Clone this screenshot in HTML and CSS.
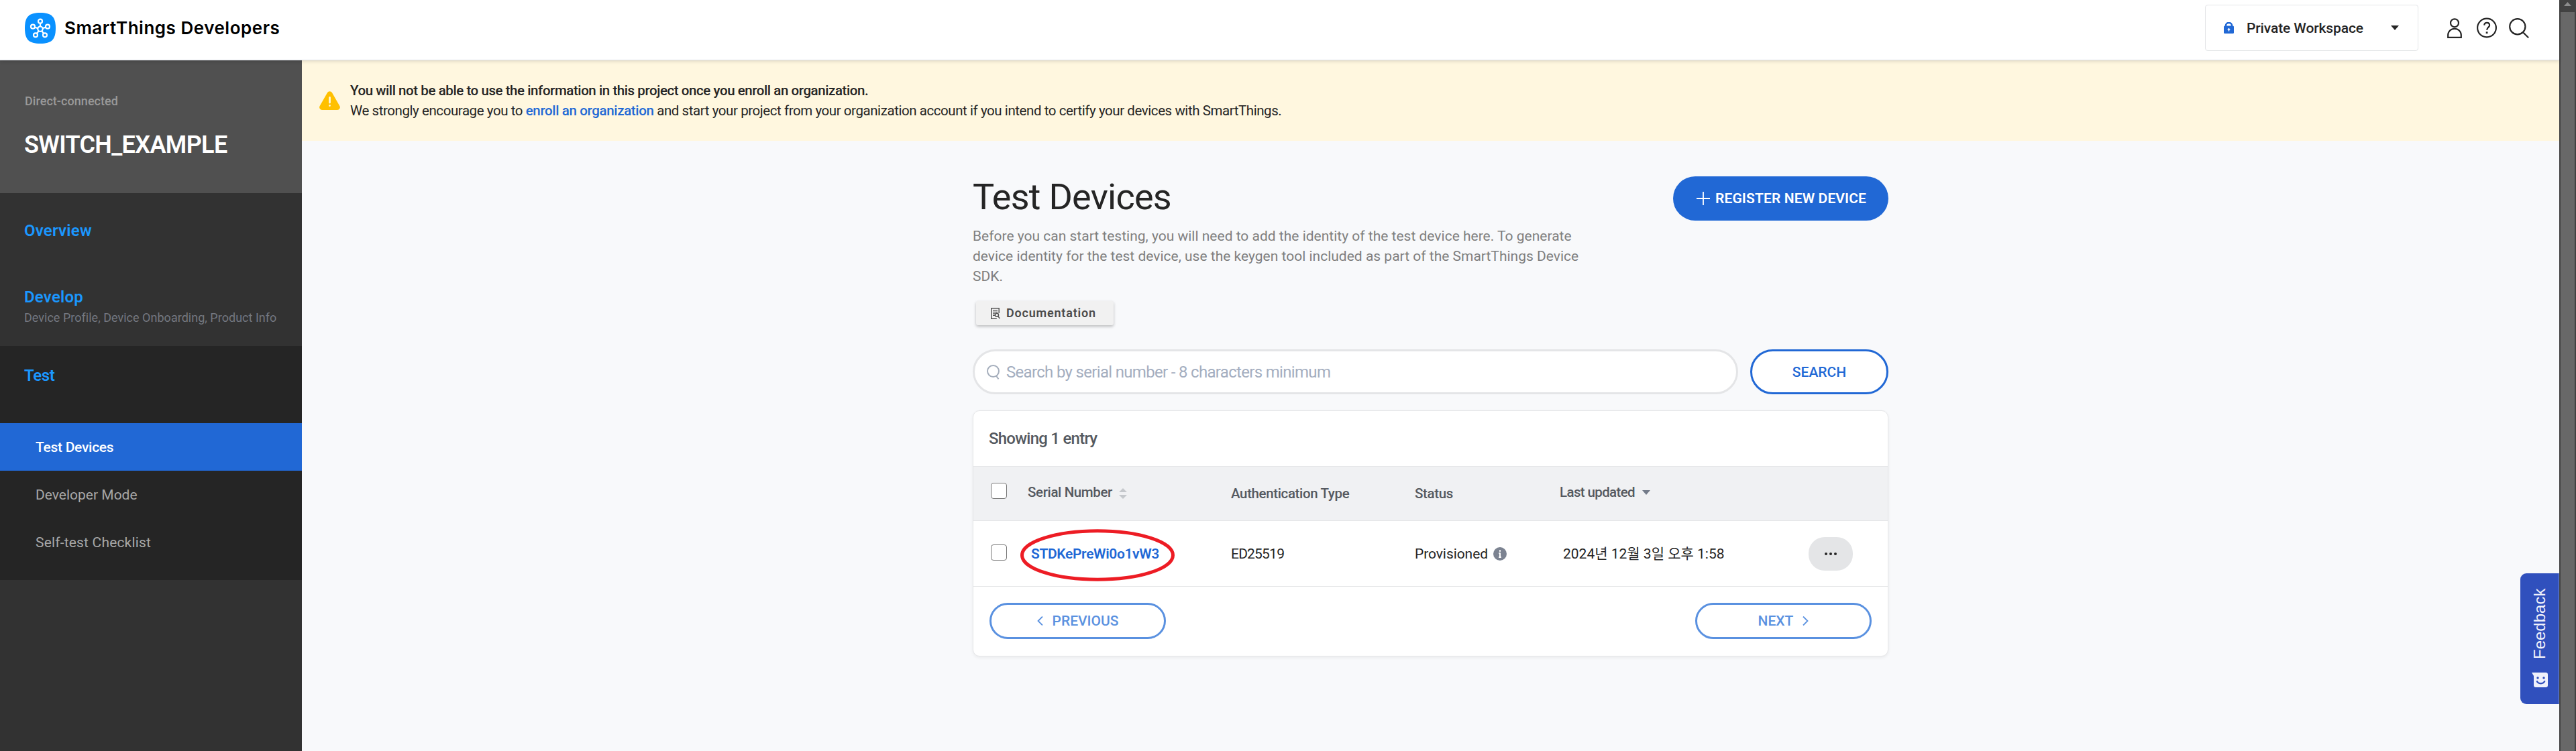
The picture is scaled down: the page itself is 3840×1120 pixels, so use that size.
FILE: index.html
```
<!DOCTYPE html>
<html lang="en">
<head>
<meta charset="utf-8">
<title>Test Devices - SmartThings Developers</title>
<link rel="stylesheet" href="styles.css">
</head>
<body>
<div class="app">
  <header class="topbar">
    <svg class="logo" width="46" height="46" viewBox="0 0 46 46">
      <path d="M23 0C40 0 46 6 46 23S40 46 23 46 0 40 0 23 6 0 23 0Z" fill="#0a91ff"/>
      <g fill="none" stroke="#fff" stroke-width="2.2">
        <circle cx="23" cy="24.200" r="3.700"/><circle cx="23" cy="12.700" r="3"/><circle cx="34" cy="20.700" r="3"/><circle cx="30" cy="33.300" r="3"/><circle cx="16" cy="33.300" r="3"/><circle cx="12" cy="20.700" r="3"/>
        <path d="M23 15.700v5M31 21.700l-4.500 1.400M28.200 31l-3-3.900M17.800 31l3-3.900M15 21.700l4.500 1.400"/>
      </g>
    </svg>
    <span class="brand">SmartThings Developers</span>
    <div class="workspace">
      <svg width="15" height="17" viewBox="0 0 15 17"><path d="M3 7V5a4.500 4 0 0 1 9 0v2" fill="none" stroke="#2168d5" stroke-width="2.600"/><rect y="5.500" width="15" height="11.500" rx="1.500" fill="#2168d5"/><path d="M7.500 9v4.500M5.700 10.700h3.600" stroke="#fff" stroke-width="1.600"/></svg>
      <span class="workspace-name">Private Workspace</span>
      <svg class="caret" width="12" height="7" viewBox="0 0 12 7"><path d="M0 0h12L6 7z" fill="#252525"/></svg>
    </div>
    <svg class="ico-user" width="22" height="30" viewBox="0 0 22 30" fill="none" stroke="#252525" stroke-width="2.200"><circle cx="11" cy="7.300" r="6"/><path d="M1.200 28.800v-3.500a9.800 9.500 0 0 1 19.600 0v3.500z"/></svg>
    <svg class="ico-help" width="30" height="31" viewBox="0 0 30 31" fill="none" stroke="#252525" stroke-width="2.200"><circle cx="15" cy="15.500" r="13.900"/><path d="M11.200 11.600c.2-2.500 1.800-3.800 4-3.800 2.300 0 3.900 1.400 3.900 3.600 0 3.200-3.900 3.600-3.900 7.300"/><path d="M15.100 21.300v2.700" stroke-width="2.800"/></svg>
    <svg class="ico-find" width="30" height="30" viewBox="0 0 30 30" fill="none" stroke="#252525" stroke-width="2.200"><circle cx="12.800" cy="12.700" r="11.600"/><path d="M20.800 21l8.400 8.200"/></svg>
  </header>

  <div class="body">
    <aside class="sidebar">
      <div class="project">
        <span class="kind">Direct-connected</span>
        <span class="project-name">SWITCH_EXAMPLE</span>
      </div>
      <nav>
        <a class="nav-title overview">Overview</a>
        <a class="nav-title develop">Develop</a>
        <span class="nav-sub">Device Profile, Device Onboarding, Product Info</span>
        <div class="group">
          <a class="nav-title test">Test</a>
          <a class="item active">Test Devices</a>
          <a class="item">Developer Mode</a>
          <a class="item checklist">Self-test Checklist</a>
        </div>
      </nav>
    </aside>

    <div class="page">
      <div class="banner">
        <svg width="31" height="28" viewBox="0 0 31 28"><path d="M12 2.200a4 4 0 0 1 7 0l11.300 19.800a4 4 0 0 1-3.500 6H4.200a4 4 0 0 1-3.500-6z" fill="#ffc000"/><path d="M15.500 9.500v7.500M15.500 21.300v.3" stroke="#fff7df" stroke-width="2.800" stroke-linecap="round"/></svg>
        <div class="banner-text">
          <strong>You will not be able to use the information in this project once you enroll an organization.</strong>
          <span>We strongly encourage you to <a>enroll an organization</a> and start your project from your organization account if you intend to certify your devices with SmartThings.</span>
        </div>
      </div>

      <main class="content">
        <div class="intro">
          <div>
            <h1>Test Devices</h1>
            <p class="lead">Before you can start testing, you will need to add the identity of the test device here. To generate device identity for the test device, use the keygen tool included as part of the SmartThings Device SDK.</p>
            <a class="doc">
              <svg width="14" height="17" viewBox="0 0 14 17" fill="none" stroke="#555" stroke-width="1.500"><path d="M12.200 8V.8H.8v15.400h8"/><path d="M3 3.800h7M3 6.300h7M3 8.800h3.500M3 11.300h3" stroke-width="1.200"/><circle cx="9" cy="10.800" r="2.500"/><path d="M10.800 12.800l2.700 3.200"/></svg>
              <span>Documentation</span>
            </a>
          </div>
          <a class="register">
            <svg width="20" height="20" viewBox="0 0 20 20"><path d="M10 0v20M0 10h20" stroke="#fff" stroke-width="1.800"/></svg>
            <span>REGISTER NEW DEVICE</span>
          </a>
        </div>

        <div class="search-row">
          <div class="search-box">
            <svg width="19" height="22" viewBox="0 0 19 22" fill="none" stroke="#a5aebc" stroke-width="2"><circle cx="9.500" cy="9.500" r="8.500"/><path d="M14 16.500l3.500 4.800"/></svg>
            <span class="hint">Search by serial number - 8 characters minimum</span>
          </div>
          <a class="search-btn">SEARCH</a>
        </div>

        <section class="card">
          <div class="count">Showing 1 entry</div>
          <div class="row head">
            <i class="check"></i>
            <div class="cell sort"><span>Serial Number</span><svg width="12" height="16" viewBox="0 0 12 16"><path d="M0 6L6 0l6 6zM0 10h12l-6 6z" fill="#c5c8cc"/></svg></div>
            <div class="cell">Authentication Type</div>
            <div class="cell">Status</div>
            <div class="cell sort updated"><span>Last updated</span><svg width="12" height="7" viewBox="0 0 12 7"><path d="M0 0h12L6 7z" fill="#747c8a"/></svg></div>
          </div>
          <div class="row entry">
            <i class="check"></i>
            <div class="cell serial"><a>STDKePreWi0o1vW3</a>
              <svg class="mark" width="230" height="78" viewBox="0 0 230 78"><ellipse cx="115" cy="39" rx="112.500" ry="36.200" fill="none" stroke="#ed1c24" stroke-width="5"/></svg>
            </div>
            <div class="cell auth">ED25519</div>
            <div class="cell status"><span>Provisioned</span><svg width="20" height="20" viewBox="0 0 20 20"><circle cx="10" cy="10" r="10" fill="#7c8391"/><path d="M10 4.300v2.400M10 8.500v6.700M8.300 8.900h2M8.200 15h3.600" stroke="#fff" stroke-width="2"/></svg></div>
            <div class="cell date">2024년 12월 3일 오후 1:58</div>
            <a class="more"><i></i><i></i><i></i></a>
          </div>
          <div class="pager">
            <a class="page-btn"><svg width="9" height="14" viewBox="0 0 9 14"><path d="M8 .5L1.500 7 8 13.500" fill="none" stroke="#5a91e0" stroke-width="1.800"/></svg><span>PREVIOUS</span></a>
            <a class="page-btn next"><span>NEXT</span><svg width="9" height="14" viewBox="0 0 9 14"><path d="M1 .5L7.500 7 1 13.500" fill="none" stroke="#5a91e0" stroke-width="1.800"/></svg></a>
          </div>
        </section>
      </main>
    </div>
  </div>

  <a class="feedback">
    <span>Feedback</span>
    <svg width="24" height="22" viewBox="0 0 24 22"><path d="M0 0h21a3 3 0 0 1 3 3v16a3 3 0 0 1-3 3H6a3 3 0 0 1-3-3V5z" fill="#f0f2fb"/><g fill="#3050bd"><circle cx="9" cy="8" r="1.700"/><circle cx="18" cy="8" r="1.700"/></g><path d="M7.500 12.300c2 5.300 10 5.300 12 0" fill="none" stroke="#3050bd" stroke-width="2.200"/></svg>
  </a>
</div>
<div class="scrollbar"><svg width="11" height="6" viewBox="0 0 11 6"><path d="M0 6l5.500-6L11 6z" fill="#8c8c8c"/></svg><div class="thumb"></div></div>
</body>
</html>
```
FILE: styles.css
```
* { box-sizing: border-box; }
body {
  margin: 0;
  display: grid;
  grid-template-columns: 3815px 25px;
  height: 1120px;
  overflow: hidden;
  background: #f8f9fb;
  color: #252525;
  font-family: Roboto, "Noto Sans CJK KR", sans-serif;
  font-size: 21px;
  line-height: 30px;
}
svg { display: block; flex: none; }
a, span, strong { white-space: nowrap; }
.app { position: relative; display: flex; flex-direction: column; }

.topbar {
  position: relative;
  z-index: 1;
  display: flex;
  align-items: center;
  height: 90px;
  padding: 0 45px 6px 37px;
  background: #fff;
  border-bottom: 1px solid #dfe2e8;
  box-shadow: 0 2px 5px rgba(0, 0, 0, .12);
}
.brand { margin-left: 13px; font: 600 26px/30px Inter, sans-serif; letter-spacing: .52px; color: #000; }
.workspace {
  display: flex;
  align-items: center;
  width: 318px;
  height: 69px;
  margin-left: auto;
  padding: 0 28px 0 27px;
  border: 1px solid #e3e5e7;
  border-radius: 4px;
}
.workspace-name { margin-left: 19px; font-weight: 500; letter-spacing: -.11px; }
.caret { margin-left: auto; }
.ico-user { margin-left: 43px; }
.ico-help { margin-left: 22px; }
.ico-find { margin-left: 18px; }

.body { flex: 1; display: grid; grid-template-columns: 450px 1fr; }
.sidebar { background: #323232; }
.project { display: flex; flex-direction: column; height: 198px; padding: 49px 37px 0; background: #505050; }
.kind { font-size: 18px; font-weight: 500; line-height: 24px; letter-spacing: .05px; color: #999; }
.project-name { margin-top: 29px; margin-left: -1px; font-size: 36px; font-weight: 600; line-height: 48px; letter-spacing: -.65px; color: #fff; }
nav { display: flex; flex-direction: column; }
.nav-title { padding-left: 36px; font-size: 24px; font-weight: 600; letter-spacing: .22px; color: #1b97ff; }
.overview { margin-top: 41px; }
.develop { margin-top: 69px; }
.nav-sub { margin: 4px 0 30px; padding-left: 36px; font-size: 18px; line-height: 24px; letter-spacing: .02px; color: #737780; }
.group { display: flex; flex-direction: column; padding: 29px 0 21px; background: #252525; }
.test { margin-bottom: 56px; letter-spacing: -.4px; }
.item { display: flex; align-items: center; height: 71px; padding-left: 53px; color: #a8a8a8; }
.active { background: #2168d5; color: #fff; font-weight: 500; letter-spacing: -.28px; }
.checklist { letter-spacing: .18px; }

.banner { display: flex; align-items: center; height: 120px; padding: 0 26px; background: #fff7df; }
.banner-text { display: flex; flex-direction: column; margin-left: 15px; font-size: 20.5px; letter-spacing: -.43px; }
.banner strong, .banner a { font-weight: 500; }
.banner a { color: #2168d5; letter-spacing: -.35px; }

.content { width: 1365px; margin: 0 auto; padding-top: 54px; }
.intro { display: flex; justify-content: space-between; align-items: flex-start; }
h1 { margin: 0; font-size: 54px; font-weight: 400; line-height: 60px; letter-spacing: -.75px; white-space: nowrap; }
.lead { width: 930px; margin: 13px 0 22px; color: #7f7f7f; }
.doc {
  display: flex;
  align-items: center;
  width: 205px;
  height: 36px;
  margin-left: 5px;
  padding-left: 22px;
  border-radius: 3px;
  background: #f1f1f1;
  box-shadow: 0 2px 4px rgba(0, 0, 0, .25);
  font-size: 18px;
  font-weight: 600;
  letter-spacing: .8px;
  color: #4c4c4c;
}
.doc span { margin-left: 9px; }
.register {
  display: flex;
  align-items: center;
  width: 321px;
  height: 66px;
  margin-top: -1px;
  padding-left: 35px;
  border-radius: 33px;
  background: #2168d5;
  color: #fff;
  font-weight: 600;
  letter-spacing: .12px;
}
.register span { margin-left: 8px; }

.search-row { display: flex; justify-content: space-between; margin-top: 36px; }
.search-box, .search-btn { display: flex; align-items: center; height: 67px; border: 3px solid #e4e5e7; border-radius: 34px; background: #fff; }
.search-box { width: 1141px; padding-left: 18px; }
.hint { margin-left: 10px; font-size: 24px; letter-spacing: -.68px; color: #a4aebf; }
.search-btn { justify-content: center; width: 206px; border-color: #2168d5; color: #2168d5; font-weight: 500; }

.card { margin-top: 24px; height: 367px; border: 1px solid #e4e5e7; border-radius: 10px; background: #fff; box-shadow: 0 2px 5px rgba(0, 0, 0, .06); }
.count { display: flex; align-items: center; height: 83px; padding-left: 23px; border-bottom: 1px solid #e4e5e7; font-size: 24px; font-weight: 500; letter-spacing: -.75px; color: #555960; }
.row { display: grid; grid-template-columns: 55px 303px 274px 216px 371px 66px; align-items: center; padding-left: 26px; border-bottom: 1px solid #e4e5e7; }
.head { height: 81px; background: #f0f1f3; font-size: 20.5px; font-weight: 500; letter-spacing: -.37px; color: #555960; }
.entry { height: 98px; }
.check { width: 24px; height: 24px; border: 1px solid #767676; border-radius: 4px; background: #fff; }
.head .check { margin-bottom: 8px; }
.entry .check { margin-bottom: 3px; }
.cell { display: flex; align-items: center; white-space: nowrap; }
.sort { margin-bottom: 4px; }
.sort svg { margin: 4px 0 0 10px; }
.updated { letter-spacing: -.62px; }
.updated svg { margin: 0 0 0 11px; }
.serial { position: relative; padding-left: 5px; }
.serial a { font-weight: 600; letter-spacing: -.35px; color: #2168d5; }
.mark { position: absolute; left: -11px; top: -22px; }
.auth { letter-spacing: -.8px; }
.status { letter-spacing: -.07px; }
.status svg { margin-left: 8px; }
.date { padding-left: 5px; }
.more { display: flex; align-items: center; justify-content: center; gap: 3px; height: 50px; border-radius: 24px; background: #e4e5e7; }
.more i { width: 4px; height: 4px; border-radius: 2px; background: #252525; }
.pager { display: flex; justify-content: space-between; padding: 24px 24px 0; }
.page-btn { display: flex; align-items: center; justify-content: center; gap: 14px; width: 263px; height: 54px; border: 3px solid #5a91e0; border-radius: 27px; color: #5a91e0; font-weight: 500; }

.feedback {
  position: absolute;
  right: 0;
  top: 855px;
  display: flex;
  flex-direction: column;
  align-items: center;
  width: 58px;
  height: 195px;
  padding-top: 23px;
  border-radius: 9px 0 0 9px;
  border-right: 1px solid #6f87d6;
  background: #3050bd;
}
.feedback span { height: 105px; writing-mode: vertical-rl; transform: rotate(180deg); font: 24px/28px "Liberation Sans", sans-serif; color: #f0f2fb; }
.feedback svg { margin-top: 20px; }

.scrollbar { display: flex; flex-direction: column; align-items: center; padding-top: 3px; background: #424242; }
.thumb { flex: 1; width: 21px; margin-top: 9px; background: #686868; }
```
